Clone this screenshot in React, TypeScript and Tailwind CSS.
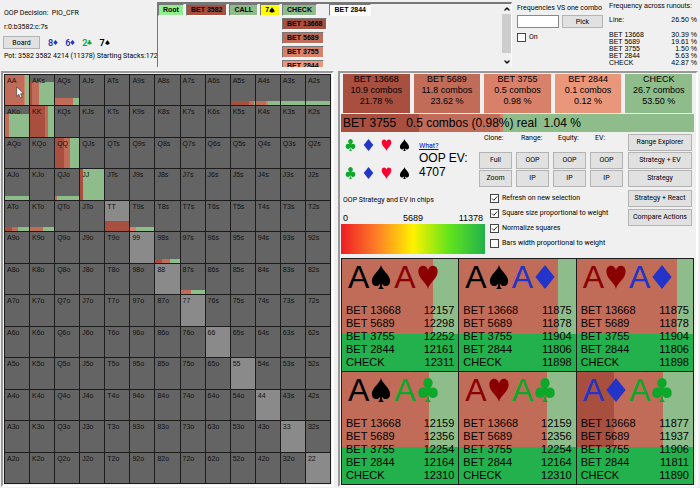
import { Fragment } from "react"
import { ChevronDown, ChevronUp } from "lucide-react"

type Suit = "s" | "h" | "d" | "c"
type Action = "b1" | "b2" | "b3" | "b4" | "check"

const actionBg: Record<Action, string> = {
  b1: "bg-[#a84f40]",
  b2: "bg-[#c16c58]",
  b3: "bg-[#d8806a]",
  b4: "bg-[#e9967a]",
  check: "bg-[#8fbc8b]",
}

const actions: { id: Action; name: string; combos: string; share: string; runout: string }[] = [
  { id: "b1", name: "BET 13668", combos: "10.9 combos", share: "21.78 %", runout: "30.39 %" },
  { id: "b2", name: "BET 5689", combos: "11.8 combos", share: "23.62 %", runout: "19.61 %" },
  { id: "b3", name: "BET 3755", combos: "0.5 combos", share: "0.98 %", runout: "1.50 %" },
  { id: "b4", name: "BET 2844", combos: "0.1 combos", share: "0.12 %", runout: "5.63 %" },
  { id: "check", name: "CHECK", combos: "26.7 combos", share: "53.50 %", runout: "42.87 %" },
]

const suitPaths: Record<Suit, string> = {
  s: "M12 0C11 5 2 10 2 16c0 3 2 5 4.6 5 2 0 3.600-1 4.500-2.600 0 3-.6 4.600-2.600 5.600h7c-2-1-2.600-2.600-2.600-5.600C13.800 20 15.400 21 17.400 21 20 21 22 19 22 16 22 10 13 5 12 0z",
  h: "M12 24C11 18 1.500 14 1.500 6.500 1.500 3 3.800.8 6.600.8 9.300.8 11.200 2.600 12 5.200 12.800 2.600 14.700.8 17.400.8c2.800 0 5.100 2.200 5.100 5.700C22.500 14 13 18 12 24z",
  d: "M12 0L22.500 12L12 24L1.500 12z",
  c: "M12 0a5 5 0 0 1 3.700 8.400C15 9.200 14 10 13.600 11 14.600 9.900 16 9.600 17.400 9.600a5.200 5.200 0 1 1-4.900 7c0 3.400.6 5.800 2.800 7.400H8.700c2.200-1.600 2.800-4 2.800-7.400a5.200 5.200 0 1 1-4.900-7C8 9.600 9.400 9.900 10.400 11 10 10 9 9.200 8.300 8.400A5 5 0 0 1 12 0z",
}

function SuitIcon({ suit, className }: { suit: Suit; className: string }) {
  return (
    <svg viewBox="0 0 24 24" preserveAspectRatio="none" fill="currentColor" className={className}>
      <path d={suitPaths[suit]} />
    </svg>
  )
}

const board: { rank: string; suit: Suit; color: string }[] = [
  { rank: "8", suit: "d", color: "text-[#2334c8]" },
  { rank: "6", suit: "d", color: "text-[#2334c8]" },
  { rank: "2", suit: "c", color: "text-[#0ba82a]" },
  { rank: "7", suit: "s", color: "text-black" },
]

const filterSuits: { suit: Suit; color: string }[] = [
  { suit: "c", color: "text-[#0ba82a]" },
  { suit: "d", color: "text-[#2334c8]" },
  { suit: "h", color: "text-[#ff0030]" },
  { suit: "s", color: "text-black" },
]

const ranks = ["A", "K", "Q", "J", "T", "9", "8", "7", "6", "5", "4", "3", "2"]

// height = weight of the hand in the range, parts = [action, width] in percent
const weights: Record<string, { height: number; parts: [Action, number][] }> = {
  AA: { height: 100, parts: [["b2", 80], ["b3", 4], ["check", 16]] },
  AKs: { height: 76, parts: [["b1", 8], ["b2", 29], ["check", 63]] },
  AQs: { height: 24, parts: [["b2", 75], ["check", 25]] },
  A5s: { height: 14, parts: [["b1", 74], ["b2", 22], ["check", 4]] },
  A4s: { height: 14, parts: [["b2", 42], ["b3", 9], ["check", 49]] },
  A3s: { height: 14, parts: [["check", 100]] },
  A2s: { height: 14, parts: [["check", 100]] },
  AKo: { height: 76, parts: [["b2", 17], ["check", 83]] },
  KK: { height: 100, parts: [["b1", 62], ["b2", 14], ["check", 24]] },
  QQ: { height: 100, parts: [["b1", 36], ["b2", 27], ["check", 37]] },
  JJ: { height: 100, parts: [["b1", 12], ["check", 88]] },
  AJo: { height: 14, parts: [["check", 100]] },
  QJo: { height: 14, parts: [["b2", 8], ["check", 92]] },
  ATo: { height: 14, parts: [["b1", 28], ["b2", 24], ["check", 48]] },
  KTo: { height: 14, parts: [["b2", 53], ["check", 47]] },
  TT: { height: 34, parts: [["b1", 100]] },
  T9s: { height: 14, parts: [["b3", 25], ["check", 75]] },
  "98s": { height: 14, parts: [["b1", 26], ["b2", 36], ["check", 38]] },
  "87s": { height: 14, parts: [["b2", 42], ["check", 58]] },
}

const combos: { cards: [Suit, Suit]; strategy: [Action, number][]; evs: string[] }[] = [
  { cards: ["s", "h"], strategy: [["b2", 78], ["check", 22]], evs: ["12157", "12298", "12252", "12161", "12311"] },
  { cards: ["s", "d"], strategy: [["b2", 85], ["check", 15]], evs: ["11875", "11878", "11904", "11806", "11898"] },
  { cards: ["h", "d"], strategy: [["b2", 86], ["check", 14]], evs: ["11875", "11878", "11904", "11806", "11898"] },
  { cards: ["s", "c"], strategy: [["b2", 75], ["check", 25]], evs: ["12159", "12356", "12254", "12164", "12310"] },
  { cards: ["h", "c"], strategy: [["b2", 75], ["check", 25]], evs: ["12159", "12356", "12254", "12164", "12310"] },
  { cards: ["d", "c"], strategy: [["b1", 32], ["b2", 42], ["check", 26]], evs: ["11877", "11937", "11906", "11811", "11890"] },
]

const cardColor: Record<Suit, string> = {
  s: "text-black",
  h: "text-[#8b0000]",
  d: "text-[#2334c8]",
  c: "text-[#0ba82a]",
}

const cloneColumns = [
  { label: "Clone:", buttons: ["Full", "Zoom"] },
  { label: "Range:", buttons: ["OOP", "IP"] },
  { label: "Equity:", buttons: ["OOP", "IP"] },
  { label: "EV:", buttons: ["OOP", "IP"] },
]

const options = [
  { label: "Refresh on new selection", checked: true },
  { label: "Square size proportional to weight", checked: true },
  { label: "Normalize squares", checked: true },
  { label: "Bars width proportional to weight", checked: false },
]

function Segments({ parts }: { parts: [Action, number][] }) {
  return (
    <div className="flex h-full w-full">
      {parts.map(([action, width]) => (
        <div key={action} className={actionBg[action]} style={{ width: `${width}%` }} />
      ))}
    </div>
  )
}

function WinButton({ children, className = "" }: { children: string; className?: string }) {
  return (
    <button
      className={`flex items-center justify-center border border-[#b4b4b4] bg-[#e1e1e1] whitespace-nowrap ${className}`}
    >
      {children}
    </button>
  )
}

function Check({ label, checked }: { label: string; checked: boolean }) {
  return (
    <label className="flex items-center gap-[3px] whitespace-nowrap">
      <span className="relative size-[9px] shrink-0">
        <input
          type="checkbox"
          defaultChecked={checked}
          className="peer block size-[9px] appearance-none border border-[#444] bg-white"
        />
        <svg
          viewBox="0 0 9 9"
          fill="none"
          stroke="#222"
          className="pointer-events-none absolute inset-0 hidden size-[9px] peer-checked:block"
        >
          <path d="M2 4.500L3.800 6.300L7.200 2.500" />
        </svg>
      </span>
      {label}
    </label>
  )
}

function TreeNode({ className, children }: { className: string; children: React.ReactNode }) {
  return (
    <button
      className={`flex h-3 shrink-0 items-center border border-t-[#777] border-l-[#777] border-r-white border-b-white px-1 font-bold whitespace-nowrap ${className}`}
    >
      {children}
    </button>
  )
}

function TopBar() {
  return (
    <header className="flex h-[71px] shrink-0 border-b border-[#fafafa]">
      <div className="flex w-[157px] shrink-0 flex-col items-start pt-2 pl-1 leading-[10px] whitespace-nowrap">
        <p className="whitespace-pre">OOP Decision:  PIO_CFR</p>
        <p className="mt-1">r:0:b3582:c:7s</p>
        <div className="mt-1 -ml-px flex items-center">
          <WinButton className="h-[13px] w-[37px]">Board</WinButton>
          <div className="ml-2 flex gap-[7px]">
            {board.map((card) => (
              <span key={card.rank} className={`flex items-center text-[9px] font-semibold ${card.color}`}>
                {card.rank}
                <SuitIcon suit={card.suit} className="size-[5px]" />
              </span>
            ))}
          </div>
        </div>
        <p className="mt-[2px]">Pot: 3582 3582 4214 (11378) Starting Stacks:172</p>
      </div>

      <div className="mt-[2px] flex h-[65px] min-w-0 flex-1 overflow-hidden border-t-2 border-r border-l border-[#777] border-r-white">
        <div className="flex flex-1 items-start gap-[2px] font-[Liberation_Sans]">
          <TreeNode className="bg-[#90ee90]">Root</TreeNode>
          <TreeNode className="bg-[#a84f40]">BET 3582</TreeNode>
          <TreeNode className="bg-[#8fbc8b]">CALL</TreeNode>
          <TreeNode className="bg-[#ffff00]">
            7<SuitIcon suit="s" className="size-[6px]" />
          </TreeNode>
          <div className="flex flex-col items-start gap-[2px]">
            <TreeNode className="bg-[#8fbc8b]">CHECK</TreeNode>
            {actions.slice(0, 4).map((action) => (
              <TreeNode key={action.id} className={actionBg[action.id]}>
                {action.name}
              </TreeNode>
            ))}
          </div>
          <TreeNode className="bg-white">BET 2844</TreeNode>
        </div>
        <div className="flex w-[9px] flex-col items-center">
          <button aria-label="Scroll up" className="h-[10px]">
            <ChevronUp className="size-2" strokeWidth={4} />
          </button>
          <div className="h-10 w-[9px] bg-[#cdcdcd]" />
          <button aria-label="Scroll down" className="mt-1 h-[10px]">
            <ChevronDown className="size-2" strokeWidth={4} />
          </button>
        </div>
      </div>

      <div className="w-[97px] shrink-0 pt-[3px] pl-[5px] leading-[10px] whitespace-nowrap">
        <label htmlFor="combo" className="block">
          Frequencies VS one combo
        </label>
        <div className="mt-[2px] mb-1 flex gap-[3px]">
          <input id="combo" className="h-[13px] w-[42px] border border-[#888] bg-white px-0.5" />
          <WinButton className="h-[13px] w-[41px]">Pick</WinButton>
        </div>
        <Check label="On" checked={false} />
      </div>

      <div className="w-[91px] shrink-0 pt-[2px] pr-[3px] font-[Liberation_Sans] leading-[7px] whitespace-nowrap">
        <p>Frequency across runouts:</p>
        <table className="mt-[7px] w-full">
          <tbody>
            <tr>
              <th className="pb-2 text-left font-normal">Line:</th>
              <td className="pb-2 text-right">26.50 %</td>
            </tr>
            {actions.map((action) => (
              <tr key={action.id}>
                <th className="text-left font-normal">{action.name}</th>
                <td className="text-right">{action.runout}</td>
              </tr>
            ))}
          </tbody>
        </table>
      </div>
    </header>
  )
}

function RangeMatrix() {
  return (
    <div className="grid h-full grid-cols-[repeat(13,minmax(0,1fr))] grid-rows-[repeat(13,minmax(0,1fr))] gap-px border border-[#1c1c1c] bg-[#1c1c1c] font-[Liberation_Sans] text-[7px] leading-[8px] text-[#111]">
      {ranks.map((row, r) => (
        <Fragment key={row}>
          {ranks.map((col, c) => {
            const hand = r === c ? row + col : r < c ? `${row}${col}s` : `${col}${row}o`
            const weight = weights[hand]
            return (
              <div key={hand} className={`relative ${r === c ? "bg-[#8a8a8a]" : "bg-[#646464]"}`}>
                {weight && (
                  <div className="absolute inset-x-0 bottom-0" style={{ height: `${weight.height}%` }}>
                    <Segments parts={weight.parts} />
                  </div>
                )}
                <span className="relative block pt-[2px] pl-[2px]">{hand}</span>
                {hand === "AA" && (
                  <svg viewBox="0 0 12 19" className="absolute top-[11px] left-[11px] z-10 h-[13px] w-2">
                    <path
                      d="M1 1v14.500l3.300-3.200 2.300 5.500 2.600-1.100-2.300-5.300h4.500z"
                      fill="#fff"
                      stroke="#333"
                      strokeWidth="1"
                    />
                  </svg>
                )}
              </div>
            )
          })}
        </Fragment>
      ))}
    </div>
  )
}

function Controls() {
  return (
    <section className="flex shrink-0">
      <div className="flex min-w-0 flex-1 flex-col">
        <div className="flex h-14">
          <div className="grid w-[72px] shrink-0 grid-cols-4 content-start gap-y-4 pt-[7px]">
            {[0, 1].map((row) =>
              filterSuits.map(({ suit, color }) => (
                <button key={suit + row} aria-label={`Suit ${suit}`} className={`flex justify-center ${color}`}>
                  <SuitIcon suit={suit} className="h-3 w-[11px]" />
                </button>
              )),
            )}
          </div>
          <div className="pt-[9px] pl-[6px] whitespace-nowrap">
            <a href="#what" className="block leading-[10px] text-[#0000ee] underline">
              What?
            </a>
            <p className="font-[Liberation_Sans] text-[12px] leading-[14px]">
              OOP EV:
              <br />
              4707
            </p>
          </div>
          <div className="mr-[5px] ml-auto flex gap-1 pt-px">
            {cloneColumns.map((column) => (
              <div key={column.label} className="flex w-[33px] flex-col">
                <span className="mb-[9px] pl-[5px] leading-[10px]">{column.label}</span>
                {column.buttons.map((label) => (
                  <WinButton key={label} className="mb-px h-[17px]">
                    {label}
                  </WinButton>
                ))}
              </div>
            ))}
          </div>
        </div>

        <div className="flex">
          <div className="w-36 shrink-0 pt-[7px]">
            <p className="pl-[2px] leading-[10px]">OOP Strategy and EV in chips</p>
            <div className="mt-2 grid grid-cols-3 px-[2px] font-[Liberation_Sans] text-[9px] leading-[11px]">
              <span>0</span>
              <span className="text-center">5689</span>
              <span className="text-right">11378</span>
            </div>
            <div className="h-[30px] bg-[linear-gradient(to_right,#ed1c24_0%,#ff7f27_25%,#fff200_50%,#62e41c_75%,#22b14c_100%)]" />
          </div>
          <div className="flex flex-col gap-1 pt-[5px] pl-[5px] leading-[11px]">
            {options.map((option) => (
              <Check key={option.label} {...option} />
            ))}
          </div>
        </div>
      </div>

      <div className="flex w-[66px] shrink-0 flex-col gap-px pt-[2px] pr-[2px]">
        <WinButton className="h-[17px]">Range Explorer</WinButton>
        <WinButton className="h-[17px]">Strategy + EV</WinButton>
        <WinButton className="mb-[2px] h-[17px]">Strategy</WinButton>
        <WinButton className="mb-px h-[17px]">Strategy + React</WinButton>
        <WinButton className="h-[17px]">Compare Actions</WinButton>
      </div>
    </section>
  )
}

function ComboCard({ cards, strategy, evs }: (typeof combos)[number]) {
  return (
    <article className="relative overflow-hidden bg-[#22b14c]">
      <div className="absolute inset-x-0 top-0 h-2/3">
        <Segments parts={strategy} />
      </div>
      <div className="relative flex h-full flex-col justify-between px-1 pt-[2px] pb-[2px]">
        <div className="flex h-8 items-center px-[2px] text-[32px] leading-8">
          {cards.map((suit) => (
            <span key={suit} className={`flex items-center gap-px pr-[2px] ${cardColor[suit]}`}>
              A
              <SuitIcon suit={suit} className="h-6 w-[22px]" />
            </span>
          ))}
        </div>
        <table className="w-full text-[11px] leading-[13px]">
          <tbody>
            {actions.map((action, i) => (
              <tr key={action.id}>
                <th className="text-left font-normal">{action.name}</th>
                <td className="text-right">{evs[i]}</td>
              </tr>
            ))}
          </tbody>
        </table>
      </div>
    </article>
  )
}

export default function App() {
  return (
    <div className="flex min-h-screen flex-col bg-[#f0f0f0] font-[Roboto,sans-serif] text-[7px] text-black">
      <TopBar />
      <main className="grid flex-1 grid-cols-[334px_minmax(0,1fr)] gap-1 pr-[2px] pb-px">
        <section className="ml-px border-2 border-[#999] border-r-white border-b-white p-px">
          <RangeMatrix />
        </section>

        <section className="flex flex-col border-2 border-[#999] border-r-white border-b-white pr-[2px] pl-px">
          <div className="flex gap-1 px-[2px] pt-px font-[Liberation_Sans] text-[9px] leading-[11px]">
            {actions.map((action) => (
              <button key={action.id} className={`h-[39px] flex-1 pb-[6px] text-center ${actionBg[action.id]}`}>
                {action.name}
                <br />
                {action.combos}
                <br />
                {action.share}
              </button>
            ))}
          </div>
          <div className="relative mt-px h-[18px] shrink-0">
            <div className="absolute inset-0">
              <Segments parts={[["b1", 22], ["b2", 23], ["b3", 1], ["check", 54]]} />
            </div>
            <p className="relative pl-[2px] font-[Liberation_Sans] text-[12px] leading-[18px] whitespace-pre">
              BET 3755   0.5 combos (0.98%) real  1.04 %
            </p>
          </div>
          <Controls />
          <div className="mt-1 grid flex-1 grid-cols-3 grid-rows-2 gap-px border border-[#1c1c1c] bg-[#1c1c1c] font-[Liberation_Sans]">
            {combos.map((combo) => (
              <ComboCard key={combo.cards.join("")} {...combo} />
            ))}
          </div>
        </section>
      </main>
    </div>
  )
}
